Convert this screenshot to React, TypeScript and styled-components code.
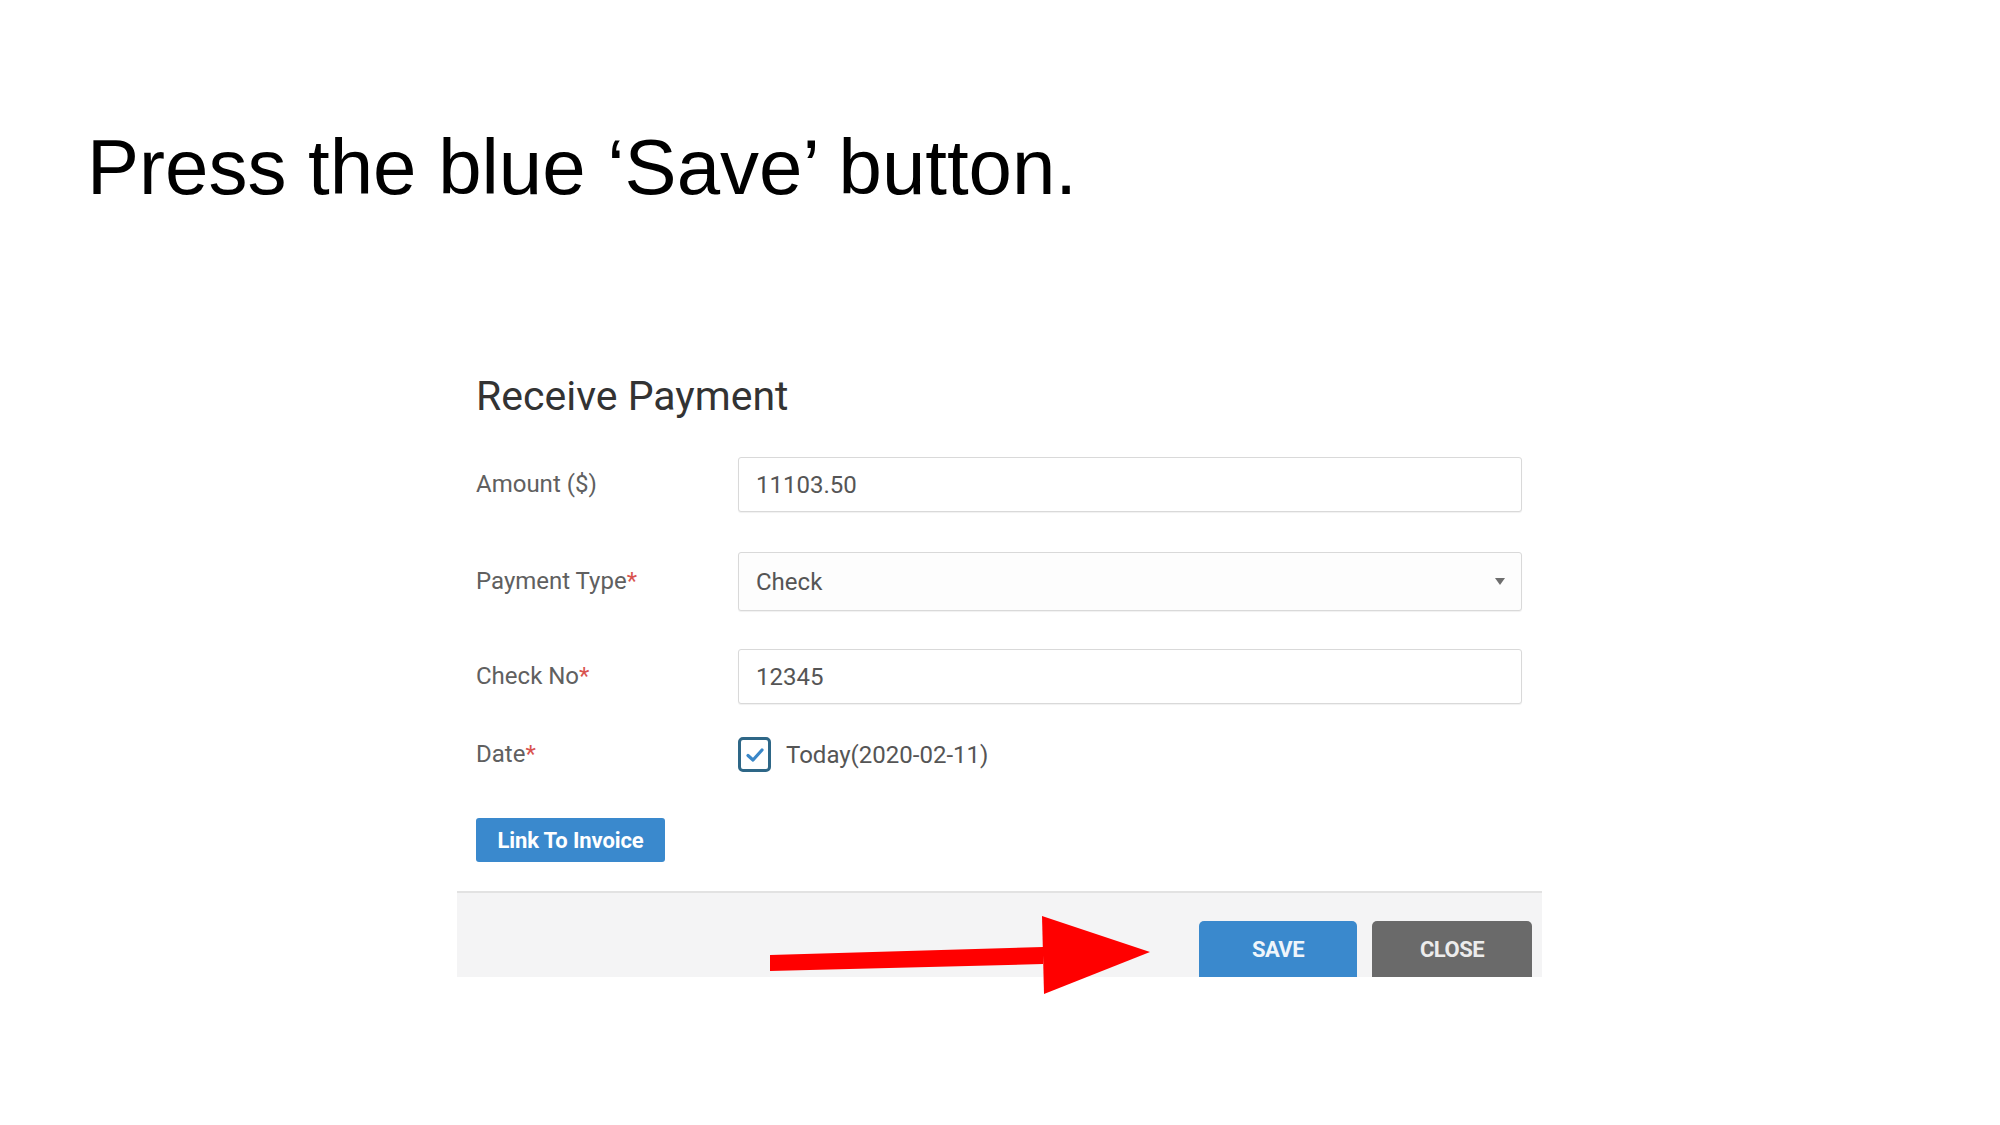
import React from "react";
import styled, { createGlobalStyle } from "styled-components";

const GlobalStyle = createGlobalStyle`
  html, body {
    margin: 0;
    padding: 0;
    background: #ffffff;
  }
  body {
    font-family: Roboto, "Liberation Sans", Arial, sans-serif;
  }
  * { box-sizing: border-box; }
`;

const Page = styled.div`
  position: relative;
  width: 2000px;
  height: 1125px;
  overflow: hidden;
  background: #ffffff;
`;

const SlideTitle = styled.h1`
  margin: 0;
  padding: 128px 0 0 87px;
  font-family: "Liberation Sans", Arial, sans-serif;
  font-weight: 400;
  font-size: 78px;
  line-height: 78px;
  color: #000000;
`;

const Dialog = styled.section`
  margin: 167px 0 0 457px;
  width: 1085px;
  background: #ffffff;
  font-family: Roboto, "Liberation Sans", Arial, sans-serif;
`;

const Body = styled.div`
  padding: 0 19px 29px 19px;
`;

const DialogTitle = styled.h2`
  margin: 0 0 37px 0;
  font-size: 41px;
  line-height: 47px;
  font-weight: 400;
  color: #333333;
`;

const FieldRow = styled.div<{ $top: number }>`
  display: grid;
  grid-template-columns: 262px 784px;
  align-items: center;
  margin-top: ${(p) => p.$top}px;
`;

const Label = styled.label`
  font-size: 24px;
  line-height: 29px;
  color: #606060;
`;

const Req = styled.span`
  color: #d9534f;
`;

const TextBox = styled.div<{ $h: number }>`
  display: flex;
  align-items: center;
  height: ${(p) => p.$h}px;
  padding: 0 16px 0 17px;
  border: 1px solid #d9d9d9;
  border-radius: 3px;
  background: #ffffff;
  box-shadow: 0 1px 1px rgba(0, 0, 0, 0.06);
  font-size: 24px;
  color: #555555;
`;

const SelectBox = styled(TextBox)`
  justify-content: space-between;
  background: #fdfdfd;
`;

const Caret = styled.span`
  width: 0;
  height: 0;
  border-left: 5px solid transparent;
  border-right: 5px solid transparent;
  border-top: 7px solid #6e6e6e;
`;

const CheckWrap = styled.div`
  display: flex;
  align-items: center;
  gap: 15px;
  font-size: 24px;
  color: #555555;
`;

const CheckBoxMark = styled.span`
  display: inline-flex;
  align-items: center;
  justify-content: center;
  width: 33px;
  height: 35px;
  border: 3px solid #2e6787;
  border-radius: 5px;
  background: #ffffff;
`;

const ActionButton = styled.button<{ $tone: "blue" | "gray" }>`
  display: inline-flex;
  align-items: center;
  justify-content: center;
  border: none;
  border-radius: 4px;
  font-family: Roboto, "Liberation Sans", Arial, sans-serif;
  font-weight: 700;
  font-size: 22px;
  letter-spacing: -0.5px;
  cursor: pointer;
  background: ${(p) => (p.$tone === "blue" ? "#3a89cd" : "#6a6a6a")};
  color: ${(p) => (p.$tone === "blue" ? "#eef5fb" : "#ececec")};
`;

const LinkButton = styled(ActionButton)`
  margin-top: 46px;
  width: 189px;
  height: 44px;
  border-radius: 3px;
  letter-spacing: -0.1px;
  color: #ffffff;
`;

const FooterButton = styled(ActionButton)<{ $w: number }>`
  width: ${(p) => p.$w}px;
  height: 56px;
  border-radius: 5px 5px 0 0;
`;

const Footer = styled.footer`
  display: flex;
  justify-content: flex-end;
  gap: 15px;
  padding: 28px 10px 0 0;
  border-top: 2px solid #e2e2e2;
  background: #f4f4f5;
`;

const ArrowLayer = styled.svg`
  position: absolute;
  left: 0;
  top: 0;
  pointer-events: none;
`;

export default function App() {
  return (
    <Page>
      <GlobalStyle />
      <SlideTitle>Press the blue ‘Save’ button.</SlideTitle>
      <Dialog>
        <Body>
          <DialogTitle>Receive Payment</DialogTitle>
          <FieldRow $top={0}>
            <Label>Amount ($)</Label>
            <TextBox $h={55}>11103.50</TextBox>
          </FieldRow>
          <FieldRow $top={40}>
            <Label>
              Payment Type<Req>*</Req>
            </Label>
            <SelectBox $h={59}>
              <span>Check</span>
              <Caret />
            </SelectBox>
          </FieldRow>
          <FieldRow $top={38}>
            <Label>
              Check No<Req>*</Req>
            </Label>
            <TextBox $h={55}>12345</TextBox>
          </FieldRow>
          <FieldRow $top={33}>
            <Label>
              Date<Req>*</Req>
            </Label>
            <CheckWrap>
              <CheckBoxMark>
                <svg width="20" height="18" viewBox="0 0 20 18">
                  <path
                    d="M3 9.5 L8 14 L17 4"
                    fill="none"
                    stroke="#3a87c8"
                    strokeWidth="3.2"
                    strokeLinecap="round"
                    strokeLinejoin="round"
                  />
                </svg>
              </CheckBoxMark>
              <span>Today(2020-02-11)</span>
            </CheckWrap>
          </FieldRow>
          <LinkButton $tone="blue">Link To Invoice</LinkButton>
        </Body>
        <Footer>
          <FooterButton $tone="blue" $w={158}>
            SAVE
          </FooterButton>
          <FooterButton $tone="gray" $w={160}>
            CLOSE
          </FooterButton>
        </Footer>
      </Dialog>
      <ArrowLayer width="2000" height="1125" viewBox="0 0 2000 1125">
        <polygon points="770,955 1043,947 1043,964 770,971" fill="#ff0000" />
        <polygon points="1042,916 1150,952 1044,994" fill="#ff0000" />
      </ArrowLayer>
    </Page>
  );
}
